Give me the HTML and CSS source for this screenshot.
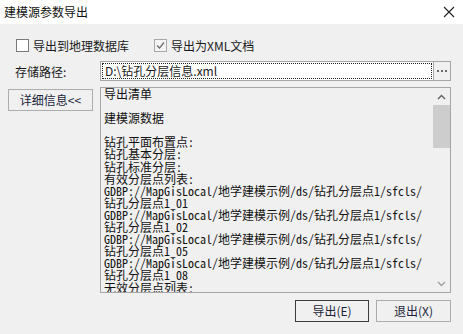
FILE: index.html
```html
<!DOCTYPE html>
<html>
<head>
  <meta charset="utf-8">
  <title>建模源参数导出</title>
  <link rel="stylesheet" href="styles.css">
</head>
<body>
  <div class="window">
    <div class="titlebar">
      <span class="title">建模源参数导出</span>
      <svg class="close" width="12" height="12" viewBox="0 0 12 12">
        <path d="M1 1 L11 11 M11 1 L1 11" stroke="#222" stroke-width="1.1" fill="none"/>
      </svg>
    </div>

    <div class="content">
      <div class="options">
        <label class="check-item">
          <span class="check-box"></span>
          <span>导出到地理数据库</span>
        </label>
        <label class="check-item">
          <span class="check-box checked">
            <svg width="11" height="11" viewBox="0 0 11 11">
              <path d="M2 5.5 L4.5 8 L9 2.5" stroke="#6d6d6d" stroke-width="1.3" fill="none"/>
            </svg>
          </span>
          <span>导出为XML文档</span>
        </label>
      </div>

      <div class="path-row">
        <span class="path-label">存储路径:</span>
        <div class="path-input"><span class="focus-ring">D:\钻孔分层信息.xml</span></div>
        <div class="browse-btn">
          <svg width="11" height="3" viewBox="0 0 11 3">
            <rect x="0" y="0" width="2" height="2" fill="#6a6a6a"/>
            <rect x="4" y="0" width="2" height="2" fill="#6a6a6a"/>
            <rect x="8" y="0" width="2" height="2" fill="#6a6a6a"/>
          </svg>
        </div>
      </div>

      <div class="detail-row">
        <div class="btn detail-btn">详细信息&lt;&lt;</div>
        <div class="log-box">
          <div class="log-text">导出清单

建模源数据

钻孔平面布置点:
钻孔基本分层:
钻孔标准分层:
有效分层点列表:
GDBP://MapGisLocal/地学建模示例/ds/钻孔分层点1/sfcls/
钻孔分层点1_01
GDBP://MapGisLocal/地学建模示例/ds/钻孔分层点1/sfcls/
钻孔分层点1_02
GDBP://MapGisLocal/地学建模示例/ds/钻孔分层点1/sfcls/
钻孔分层点1_05
GDBP://MapGisLocal/地学建模示例/ds/钻孔分层点1/sfcls/
钻孔分层点1_08
无效分层点列表:
GDBP://MapGisLocal/地学建模示例/ds/钻孔分层点1/sfcls/</div>
          <div class="scrollbar">
            <div class="arrow">
              <svg width="9" height="6" viewBox="0 0 9 6"><path d="M1 5 L4.5 1.5 L8 5" stroke="#606060" stroke-width="1.4" fill="none"/></svg>
            </div>
            <div class="thumb"></div>
            <div class="track"></div>
            <div class="arrow">
              <svg width="9" height="6" viewBox="0 0 9 6"><path d="M1 1 L4.5 4.5 L8 1" stroke="#a0a0a0" stroke-width="1.4" fill="none"/></svg>
            </div>
          </div>
        </div>
      </div>

      <div class="actions">
        <div class="btn action-btn default">导出(E)</div>
        <div class="btn action-btn">退出(X)</div>
      </div>
    </div>
  </div>
</body>
</html>
```

FILE: styles.css
```css
* {
    margin: 0;
    padding: 0;
    box-sizing: border-box;
}
body {
    font-family: "Noto Sans CJK SC", "Microsoft YaHei", sans-serif;
    font-size: 12px;
    color: #1a1a1a;
    background: #f0f0f0;
}
.window {
    width: 463px;
    height: 334px;
    display: flex;
    flex-direction: column;
}

/* title bar */
.titlebar {
    height: 24px;
    background: #fff;
    display: flex;
    align-items: center;
    justify-content: space-between;
    padding: 0 8px 0 4px;
}
.title {
    font-size: 12px;
    line-height: 14px;
    color: #111;
}
.close {
    display: block;
}

.content {
    flex: 1;
    padding: 15px 12px 0 8px;
    display: flex;
    flex-direction: column;
}

/* checkboxes */
.options {
    display: flex;
    gap: 25px;
    padding-left: 8px;
    height: 13px;
    align-items: center;
}
.check-item {
    display: flex;
    align-items: center;
    gap: 4px;
    line-height: 13px;
}
.check-box {
    width: 13px;
    height: 13px;
    border: 1px solid #7a7a7a;
    background: #fff;
    display: flex;
    align-items: center;
    justify-content: center;
}
.check-box.checked {
    border-color: #a8a8a8;
    background: #f4f4f4;
}
.check-box svg {
    display: block;
}

/* path row */
.path-row {
    margin-top: 9px;
    display: flex;
    height: 20px;
    align-items: stretch;
}
.path-label {
    width: 92px;
    padding-left: 7px;
    line-height: 21px;
}
.path-input {
    flex: 1;
    background: #fff;
    border: 1px solid #a6a6a6;
    padding: 1px;
    display: flex;
}
.focus-ring {
    flex: 1;
    border: 1px dotted #222;
    padding-left: 2px;
    line-height: 14px;
}
.browse-btn {
    width: 17px;
    border: 1px solid #a6a6a6;
    border-left: 0;
    background: #f0f0f0;
    display: flex;
    align-items: center;
    justify-content: center;
    padding-left: 1px;
}
.browse-btn svg {
    display: block;
}

/* details row */
.detail-row {
    margin-top: 6px;
    display: flex;
    gap: 7px;
    align-items: flex-start;
}
.btn {
    border: 1px solid #adadad;
    background: #f0f0f0;
    text-align: center;
    color: #1c1f3a;
}
.detail-btn {
    width: 85px;
    height: 22px;
    margin-top: 2px;
    line-height: 20px;
}
.log-box {
    flex: 1;
    height: 206px;
    border: 1px solid #a6a6a6;
    display: flex;
    overflow: hidden;
}
.log-text {
    flex: 1;
    overflow: hidden;
    white-space: pre;
    padding-left: 3px;
    font-family: "Noto Sans Mono CJK SC", "Noto Sans CJK SC", monospace;
    font-size: 12px;
    line-height: 12.1px;
    color: #111;
}
.scrollbar {
    width: 17px;
    display: flex;
    flex-direction: column;
    background: #f0f0f0;
}
.arrow {
    height: 17px;
    display: flex;
    align-items: center;
    justify-content: center;
}
.thumb {
    height: 43px;
    background: #cdcdcd;
}
.track {
    flex: 1;
}

/* bottom buttons */
.actions {
    margin-top: 7px;
    display: flex;
    justify-content: flex-end;
    gap: 7px;
}
.action-btn {
    width: 75px;
    height: 22px;
    line-height: 20px;
}
.action-btn.default {
    width: 74px;
    border-color: #3c3c3c;
}
```
